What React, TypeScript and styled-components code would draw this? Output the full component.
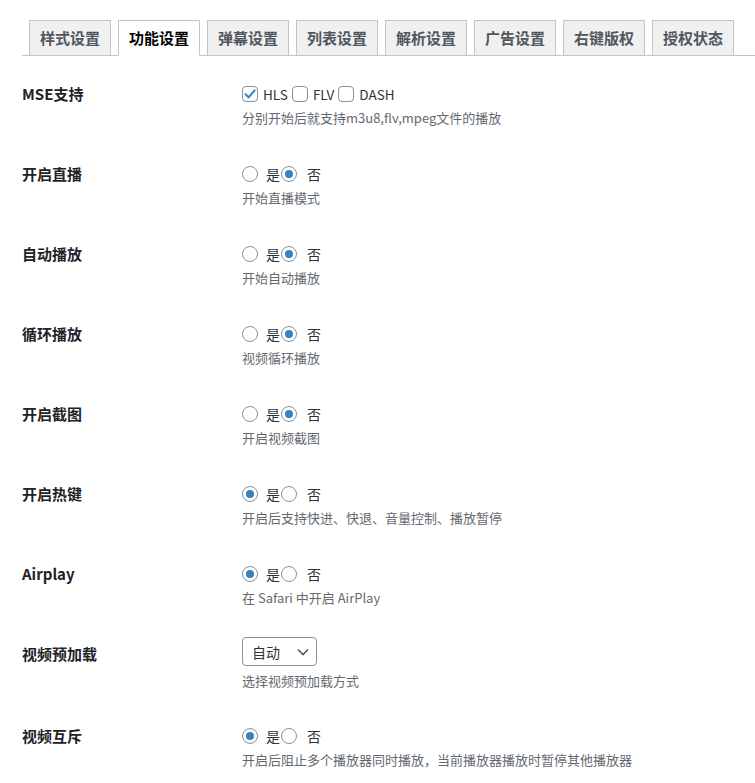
import React from "react";
import styled, { createGlobalStyle } from "styled-components";

const Global = createGlobalStyle`
  html, body { margin: 0; padding: 0; background: #ffffff; }
  body {
    font-family: "Noto Sans CJK SC", "Noto Sans", sans-serif;
    color: #2c3338;
    font-size: 14px;
  }
  * { box-sizing: border-box; }
`;

const Page = styled.div`
  width: 755px;
  min-height: 783px;
  overflow: hidden;
`;

const TabBar = styled.nav`
  display: flex;
  align-items: flex-end;
  margin-left: 22px;
  padding-top: 20px;
  border-bottom: 1px solid #c3c4c7;
  height: 56px;
`;

const Tab = styled.a<{ $active?: boolean }>`
  display: block;
  margin-left: 7px;
  width: 82px;
  height: ${(p) => (p.$active ? "36px" : "35px")};
  margin-bottom: ${(p) => (p.$active ? "-1px" : "0")};
  border: 1px solid #c3c4c7;
  border-bottom: ${(p) => (p.$active ? "1px solid #ffffff" : "none")};
  background: ${(p) => (p.$active ? "#ffffff" : "#f0f0f1")};
  color: ${(p) => (p.$active ? "#000000" : "#50575e")};
  font-size: 15px;
  font-weight: 700;
  line-height: 34px;
  text-align: center;
  text-decoration: none;
  white-space: nowrap;
`;

const Table = styled.div`
  margin: 18px 0 0 22px;
`;

const Row = styled.div<{ $bottom?: number }>`
  display: grid;
  grid-template-columns: 220px 1fr;
  padding: 8px 0 ${(p) => p.$bottom ?? 26}px;
`;

const Label = styled.div`
  font-size: 15px;
  font-weight: 700;
  line-height: 24px;
  color: #1d2327;
  white-space: nowrap;
`;

const Field = styled.div`
  display: flex;
  flex-direction: column;
`;

const Controls = styled.div<{ $select?: boolean }>`
  display: flex;
  align-items: center;
  height: ${(p) => (p.$select ? "29px" : "24px")};
  margin: ${(p) => (p.$select ? "-5px 0 3px" : "0")};
  font-size: 14px;
  color: #2c3338;
  white-space: nowrap;
`;

const Desc = styled.div`
  margin-top: 2px;
  font-size: 13px;
  line-height: 20px;
  color: #646970;
  white-space: nowrap;
`;

const RadioCircle = styled.span<{ $checked?: boolean; $gap: number; $lead?: number }>`
  display: inline-flex;
  align-items: center;
  justify-content: center;
  flex: none;
  width: 16px;
  height: 16px;
  border: 1px solid #8c8f94;
  border-radius: 50%;
  background: #ffffff;
  margin-left: ${(p) => p.$lead ?? 0}px;
  margin-right: ${(p) => p.$gap}px;
  &::before {
    content: "";
    display: ${(p) => (p.$checked ? "block" : "none")};
    width: 8px;
    height: 8px;
    border-radius: 50%;
    background: #3582c4;
  }
`;

const OptionText = styled.span<{ $after?: number; $size?: number }>`
  line-height: 24px;
  font-size: ${(p) => p.$size ?? 14}px;
  margin-right: ${(p) => p.$after ?? 0}px;
`;

const CheckSquare = styled.span`
  display: inline-flex;
  align-items: center;
  justify-content: center;
  flex: none;
  width: 16px;
  height: 16px;
  border: 1px solid #8c8f94;
  border-radius: 4px;
  background: #ffffff;
  margin-right: 5px;
`;

const SelectBox = styled.div`
  display: flex;
  align-items: center;
  justify-content: space-between;
  width: 75px;
  height: 29px;
  padding: 0 7px 0 9px;
  border: 1px solid #8c8f94;
  border-radius: 4px;
  background: #ffffff;
  color: #2c3338;
  font-size: 14px;
`;

const tabs = ["样式设置", "功能设置", "弹幕设置", "列表设置", "解析设置", "广告设置", "右键版权", "授权状态"];

function YesNo({ yes }: { yes: boolean }) {
  return (
    <Controls>
      <RadioCircle $checked={yes} $gap={8} />
      <OptionText>是</OptionText>
      <RadioCircle $checked={!yes} $gap={10} $lead={1} />
      <OptionText>否</OptionText>
    </Controls>
  );
}

function Check({ checked, label }: { checked?: boolean; label: string }) {
  return (
    <>
      <CheckSquare>
        {checked && (
          <svg width="14" height="14" viewBox="0 0 14 14">
            <polyline points="2.5,7.2 5.6,10.3 11.6,3.4" fill="none" stroke="#3582c4" strokeWidth="2" strokeLinecap="round" strokeLinejoin="round" />
          </svg>
        )}
      </CheckSquare>
      <OptionText $after={4} $size={13.5}>{label}</OptionText>
    </>
  );
}

const radioRows: { label: string; yes: boolean; desc: string }[] = [
  { label: "开启直播", yes: false, desc: "开始直播模式" },
  { label: "自动播放", yes: false, desc: "开始自动播放" },
  { label: "循环播放", yes: false, desc: "视频循环播放" },
  { label: "开启截图", yes: false, desc: "开启视频截图" },
  { label: "开启热键", yes: true, desc: "开启后支持快进、快退、音量控制、播放暂停" },
  { label: "Airplay", yes: true, desc: "在 Safari 中开启 AirPlay" },
];

export default function App() {
  return (
    <Page>
      <Global />
      <TabBar>
        {tabs.map((t, i) => (
          <Tab key={t} $active={i === 1}>
            {t}
          </Tab>
        ))}
      </TabBar>
      <Table>
        <Row>
          <Label>MSE支持</Label>
          <Field>
            <Controls>
              <Check checked label="HLS" />
              <Check label="FLV" />
              <Check label="DASH" />
            </Controls>
            <Desc>分别开始后就支持m3u8,flv,mpeg文件的播放</Desc>
          </Field>
        </Row>
        {radioRows.map((r) => (
          <Row key={r.label}>
            <Label>{r.label}</Label>
            <Field>
              <YesNo yes={r.yes} />
              <Desc>{r.desc}</Desc>
            </Field>
          </Row>
        ))}
        <Row $bottom={25}>
          <Label>视频预加载</Label>
          <Field>
            <Controls $select>
              <SelectBox>
                <span>自动</span>
                <svg width="12" height="8" viewBox="0 0 12 8">
                  <polyline points="1,1.5 6,6.5 11,1.5" fill="none" stroke="#50575e" strokeWidth="1.6" />
                </svg>
              </SelectBox>
            </Controls>
            <Desc>选择视频预加载方式</Desc>
          </Field>
        </Row>
        <Row>
          <Label>视频互斥</Label>
          <Field>
            <YesNo yes={true} />
            <Desc>开启后阻止多个播放器同时播放，当前播放器播放时暂停其他播放器</Desc>
          </Field>
        </Row>
      </Table>
    </Page>
  );
}
